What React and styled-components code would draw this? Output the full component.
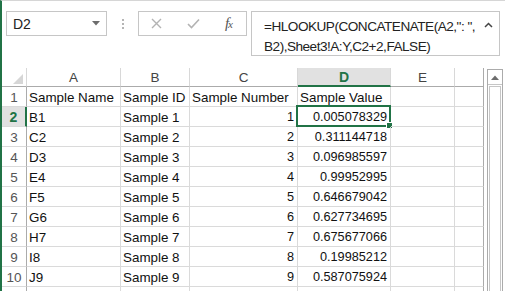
import React from 'react';
import styled, { createGlobalStyle, css } from 'styled-components';

const GlobalStyle = createGlobalStyle`
  html, body {
    margin: 0;
    padding: 0;
    background: #ffffff;
  }
  * {
    box-sizing: border-box;
  }
`;

const green = '#217346';
const gridLine = '#dadada';
const headerLine = '#ababab';

const Window = styled.div`
  width: 505px;
  height: 291px;
  overflow: hidden;
  background: #ffffff;
  border-left: 2px solid ${green};
  border-top: 1px solid #d6d6d6;
  font-family: 'Liberation Sans', Arial, sans-serif;
  display: flex;
  flex-direction: column;
`;

const Toolbar = styled.div`
  display: flex;
  align-items: flex-start;
  height: 67px;
  padding: 10px 0 0 4px;
`;

const NameBox = styled.div`
  width: 101px;
  height: 25px;
  border: 1px solid #c6c6c6;
  display: flex;
  align-items: center;
  justify-content: space-between;
  padding: 0 6px 0 6px;
  font-size: 14px;
  color: #222;
`;

const Dots = styled.div`
  width: 31px;
  height: 25px;
  display: flex;
  flex-direction: column;
  align-items: center;
  justify-content: center;
  gap: 2px;

  span {
    width: 2px;
    height: 2px;
    background: #b5b5b5;
  }
`;

const FxButtons = styled.div`
  width: 109px;
  height: 25px;
  border: 1px solid #c6c6c6;
  display: flex;
  align-items: center;
  justify-content: space-between;
  padding: 0 14px 0 12px;
`;

const FxLabel = styled.span`
  font-family: 'Liberation Serif', 'Times New Roman', serif;
  font-style: italic;
  color: #555;
  font-size: 15px;
  letter-spacing: -1px;

  small {
    font-size: 11px;
  }
`;

const FormulaBox = styled.div`
  margin-left: 4px;
  width: 249px;
  height: 45px;
  border: 1px solid #c6c6c6;
  display: flex;
  justify-content: space-between;
  padding: 5px 6px 0 12px;
`;

const FormulaText = styled.div`
  font-size: 13.6px;
  letter-spacing: -0.5px;
  line-height: 20px;
  color: #222;
  white-space: nowrap;
`;

const Sheet = styled.div`
  display: flex;
  flex: 1;
  min-height: 0;
`;

const Grid = styled.div`
  display: grid;
  grid-template-columns: 25px 94px 69px 108px 93px 64px 29px;
  grid-auto-rows: 20px;
  grid-template-rows: 19px;
  align-content: start;
`;

const ColHeader = styled.div`
  border-right: 1px solid #d8d8d8;
  border-bottom: 1px solid ${headerLine};
  display: flex;
  align-items: center;
  justify-content: center;
  font-size: 13.5px;
  color: #444;
  ${(p) =>
    p.$active &&
    css`
      background: #e1e1e1;
      border-bottom: 2px solid ${green};
      color: ${green};
      font-weight: bold;
      font-size: 14px;
    `}
  ${(p) =>
    p.$last &&
    css`
      border-right: 1px solid ${headerLine};
    `}
`;

const Corner = styled.div`
  border-right: 1px solid #d8d8d8;
  border-bottom: 1px solid ${headerLine};
  display: flex;
  align-items: flex-end;
  justify-content: flex-end;
  padding: 0 3px 2px 0;
`;

const RowHeader = styled.div`
  border-right: 1px solid ${headerLine};
  border-bottom: 1px solid ${gridLine};
  display: flex;
  align-items: center;
  justify-content: center;
  font-size: 13.5px;
  color: #555;
  padding-top: 1px;
  ${(p) =>
    p.$active &&
    css`
      background: #e1e1e1;
      border-right: 2px solid ${green};
      color: ${green};
      font-weight: bold;
      font-size: 14px;
    `}
`;

const Cell = styled.div`
  position: relative;
  border-right: 1px solid ${gridLine};
  border-bottom: 1px solid ${gridLine};
  display: flex;
  align-items: center;
  justify-content: ${(p) => (p.$num ? 'flex-end' : 'flex-start')};
  padding: 1px ${(p) => (p.$num ? '3px' : '0')} 0 ${(p) => (p.$num ? '0' : '2px')};
  font-size: ${(p) => (p.$num ? '12.7px' : '13.4px')};
  color: #111;
  white-space: nowrap;
  ${(p) =>
    p.$last &&
    css`
      border-right: 1px solid ${headerLine};
    `}
`;

const Selection = styled.div`
  position: absolute;
  left: -2px;
  top: -2px;
  right: -1px;
  bottom: -1px;
  border: 2px solid ${green};
  pointer-events: none;

  &::after {
    content: '';
    position: absolute;
    right: -4px;
    bottom: -4px;
    width: 5px;
    height: 5px;
    background: ${green};
    border: 1px solid #fff;
  }
`;

const ScrollBar = styled.div`
  margin: 1px 0 0 3px;
  width: 16px;
  border: 1px solid #ababab;
  border-bottom: none;
  display: flex;
  flex-direction: column;
`;

const ScrollArrow = styled.div`
  height: 15px;
  display: flex;
  align-items: center;
  justify-content: center;
  border-bottom: 1px solid #c6c6c6;
`;

const ScrollThumb = styled.div`
  margin: 1px 1px 0;
  flex: 1;
  border: 1px solid #c6c6c6;
  border-bottom: none;
`;

const rows = [
  ['Sample Name', 'Sample ID', 'Sample Number', 'Sample Value'],
  ['B1', 'Sample 1', '1', '0.005078329'],
  ['C2', 'Sample 2', '2', '0.311144718'],
  ['D3', 'Sample 3', '3', '0.096985597'],
  ['E4', 'Sample 4', '4', '0.99952995'],
  ['F5', 'Sample 5', '5', '0.646679042'],
  ['G6', 'Sample 6', '6', '0.627734695'],
  ['H7', 'Sample 7', '7', '0.675677066'],
  ['I8', 'Sample 8', '8', '0.19985212'],
  ['J9', 'Sample 9', '9', '0.587075924'],
];

const columns = ['A', 'B', 'C', 'D', 'E', ''];

export default function App() {
  return (
    <>
      <GlobalStyle />
      <Window>
        <Toolbar>
          <NameBox>
            <span>D2</span>
            <svg width="8" height="5" viewBox="0 0 8 5">
              <path d="M0 0 L8 0 L4 4.5 Z" fill="#6d6d6d" />
            </svg>
          </NameBox>
          <Dots>
            <span />
            <span />
            <span />
          </Dots>
          <FxButtons>
            <svg width="11" height="11" viewBox="0 0 11 11">
              <path d="M1 1 L10 10 M10 1 L1 10" stroke="#b3b3b3" strokeWidth="1.4" />
            </svg>
            <svg width="13" height="11" viewBox="0 0 13 11">
              <path d="M1 6 L4.5 9.5 L12 1.5" stroke="#b3b3b3" strokeWidth="1.6" fill="none" />
            </svg>
            <FxLabel>
              f<small>x</small>
            </FxLabel>
          </FxButtons>
          <FormulaBox>
            <FormulaText>
              <div>=HLOOKUP(CONCATENATE(A2,": ",</div>
              <div>B2),Sheet3!A:Y,C2+2,FALSE)</div>
            </FormulaText>
            <svg width="9" height="6" viewBox="0 0 9 6" style={{ marginTop: 5 }}>
              <path d="M1 5 L4.5 1.5 L8 5" stroke="#444" strokeWidth="1.5" fill="none" />
            </svg>
          </FormulaBox>
        </Toolbar>
        <Sheet>
          <Grid>
            <Corner>
              <svg width="10" height="10" viewBox="0 0 10 10">
                <path d="M10 0 L10 10 L0 10 Z" fill="#d6d6d6" />
              </svg>
            </Corner>
            {columns.map((c, i) => (
              <ColHeader key={i} $active={c === 'D'} $last={i === columns.length - 1}>
                {c}
              </ColHeader>
            ))}
            {rows.map((r, ri) => (
              <React.Fragment key={ri}>
                <RowHeader $active={ri === 1}>{ri + 1}</RowHeader>
                <Cell>{r[0]}</Cell>
                <Cell>{r[1]}</Cell>
                <Cell $num={ri > 0}>{r[2]}</Cell>
                <Cell $num={ri > 0}>
                  {r[3]}
                  {ri === 1 && <Selection />}
                </Cell>
                <Cell />
                <Cell $last />
              </React.Fragment>
            ))}
            <RowHeader />
            <Cell />
            <Cell />
            <Cell />
            <Cell />
            <Cell />
            <Cell $last />
          </Grid>
          <ScrollBar>
            <ScrollArrow>
              <svg width="8" height="5" viewBox="0 0 8 5">
                <path d="M0 5 L4 0.5 L8 5 Z" fill="#6d6d6d" />
              </svg>
            </ScrollArrow>
            <ScrollThumb />
          </ScrollBar>
        </Sheet>
      </Window>
    </>
  );
}
